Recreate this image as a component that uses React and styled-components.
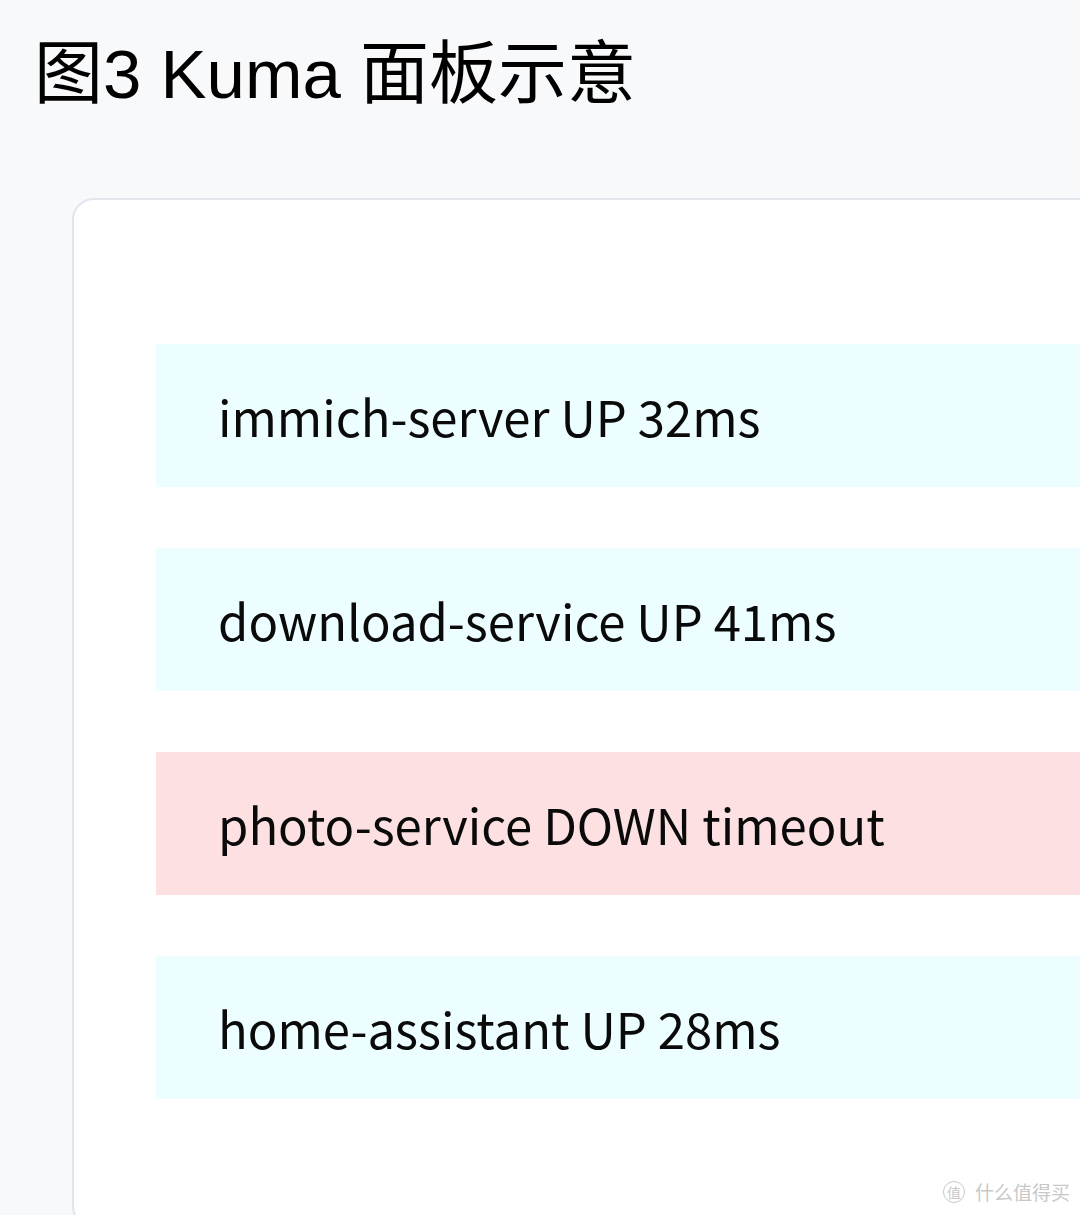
import React from "react";
import styled, { createGlobalStyle } from "styled-components";

const monitors = [
  { name: "immich-server", status: "UP", detail: "32ms" },
  { name: "download-service", status: "UP", detail: "41ms" },
  { name: "photo-service", status: "DOWN", detail: "timeout" },
  { name: "home-assistant", status: "UP", detail: "28ms" },
];

const App = () => {
  return (
    <Page>
      <GlobalStyle />
      <Title>图3 Kuma 面板示意</Title>
      <Card>
        <List>
          {monitors.map((m) => (
            <Row key={m.name} $down={m.status === "DOWN"}>
              {m.name} {m.status} {m.detail}
            </Row>
          ))}
        </List>
      </Card>
      <Watermark>
        <Badge>值</Badge>
        什么值得买
      </Watermark>
    </Page>
  );
};

export default App;

const GlobalStyle = createGlobalStyle`
  html, body {
    margin: 0;
    padding: 0;
    background: #f8f9fb;
    overflow: hidden;
  }
`;

const Page = styled.div`
  position: relative;
  width: 1080px;
  height: 1215px;
  overflow: hidden;
  background: #f8f9fb;
`;

const Title = styled.h1`
  margin: 0;
  padding: 30px 0 0 34px;
  font-family: "Liberation Sans", "Noto Sans CJK SC", sans-serif;
  font-weight: 400;
  font-size: 69px;
  line-height: 90px;
  color: #000;
`;

const Card = styled.div`
  margin: 78px 0 0 72px;
  width: 1120px;
  height: 1030px;
  box-sizing: border-box;
  background: #fff;
  border: 2px solid #e1e5ee;
  border-radius: 22px;
  padding: 144px 0 0 82px;
`;

const List = styled.div`
  display: flex;
  flex-direction: column;
  gap: 61px;
`;

const Row = styled.div`
  height: 143px;
  display: flex;
  align-items: center;
  padding-left: 62px;
  background: ${(p) => (p.$down ? "#fde0e1" : "#ecfeff")};
  font-family: "Noto Sans CJK SC", "Noto Sans", sans-serif;
  font-size: 49px;
  color: #0a0a0a;
`;

const Watermark = styled.div`
  position: absolute;
  right: 10px;
  bottom: 10px;
  display: flex;
  align-items: center;
  gap: 6px;
  font-family: "Noto Sans CJK SC", sans-serif;
  font-size: 19px;
  color: #c8c8c8;
`;

const Badge = styled.span`
  width: 20px;
  height: 20px;
  border: 1.5px solid #c8c8c8;
  border-radius: 50%;
  display: flex;
  align-items: center;
  justify-content: center;
  font-size: 14px;
  margin-right: 4px;
`;
